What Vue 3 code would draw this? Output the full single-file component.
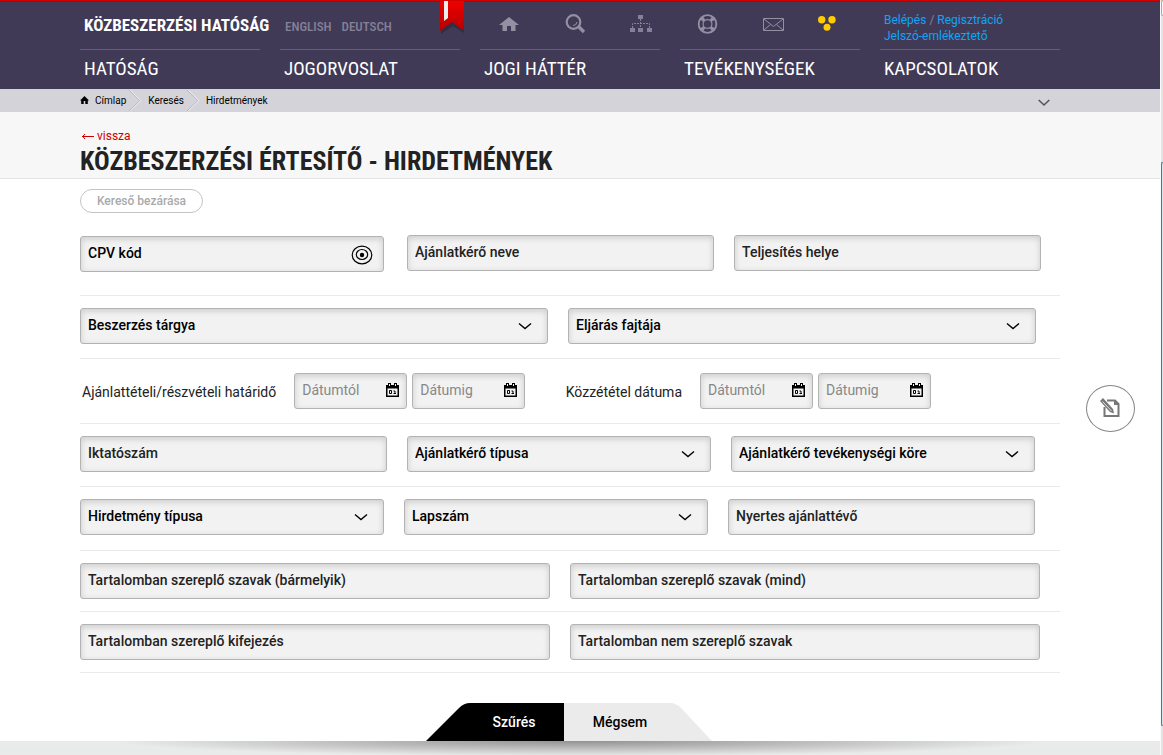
<script setup>
const menu = ['HATÓSÁG', 'JOGORVOSLAT', 'JOGI HÁTTÉR', 'TEVÉKENYSÉGEK', 'KAPCSOLATOK']
const crumbs = ['Keresés', 'Hirdetmények']

const rows = [
  { kind: 'first', fields: [
    { id: 'cpv', label: 'CPV kód', type: 'picker' },
    { id: 'ajanlatkero', label: 'Ajánlatkérő neve', type: 'text' },
    { id: 'hely', label: 'Teljesítés helye', type: 'text' }
  ] },
  { kind: 'pair-select', fields: [
    { id: 'targy', label: 'Beszerzés tárgya', type: 'select' },
    { id: 'eljaras', label: 'Eljárás fajtája', type: 'select' }
  ] },
  { kind: 'dates', groups: [
    { id: 'hatarido', label: 'Ajánlattételi/részvételi határidő' },
    { id: 'kozzetetel', label: 'Közzététel dátuma' }
  ] },
  { kind: 'text-first', fields: [
    { id: 'iktato', label: 'Iktatószám', type: 'text' },
    { id: 'ak-tipus', label: 'Ajánlatkérő típusa', type: 'select' },
    { id: 'ak-kor', label: 'Ajánlatkérő tevékenységi köre', type: 'select' }
  ] },
  { kind: 'text-last', fields: [
    { id: 'h-tipus', label: 'Hirdetmény típusa', type: 'select' },
    { id: 'lapszam', label: 'Lapszám', type: 'select' },
    { id: 'nyertes', label: 'Nyertes ajánlattévő', type: 'text' }
  ] },
  { kind: 'pair-text', fields: [
    { id: 'barmelyik', label: 'Tartalomban szereplő szavak (bármelyik)', type: 'text' },
    { id: 'mind', label: 'Tartalomban szereplő szavak (mind)', type: 'text' }
  ] },
  { kind: 'pair-text', fields: [
    { id: 'kifejezes', label: 'Tartalomban szereplő kifejezés', type: 'text' },
    { id: 'nem', label: 'Tartalomban nem szereplő szavak', type: 'text' }
  ] }
]
const dateParts = [['tol', 'Dátumtól'], ['ig', 'Dátumig']]
</script>

<template>
  <div class="screen">
    <div class="page">
      <header class="top">
        <div class="inner tools">
          <a class="brand" href="#">KÖZBESZERZÉSI HATÓSÁG</a>
          <div class="langs">
            <a href="#">ENGLISH</a>
            <a href="#">DEUTSCH</a>
            <svg class="ribbon" width="25" height="33" viewBox="0 0 25 33" aria-hidden="true">
              <defs>
                <linearGradient id="rib" x1="0" y1="0" x2="0" y2="1">
                  <stop offset="0" stop-color="#f00000" />
                  <stop offset="0.6" stop-color="#cc0000" />
                  <stop offset="1" stop-color="#b40000" />
                </linearGradient>
              </defs>
              <path d="M1 2 L1 33 L13 25 L24 32 L24 2Z" fill="#000" opacity=".22" />
              <path d="M0 0H24V30L12 21L0 30Z" fill="url(#rib)" />
              <path d="M4 0H8V17L4 20Z" fill="#eee" />
            </svg>
          </div>
          <div class="icons left-icons">
            <a href="#" aria-label="Címlap"><svg width="20" height="16" viewBox="0 0 20 16"><path d="M10 1L0 9H3.500V15H8V10H12V15H16.500V9H20Z" fill="#9390a3" /></svg></a>
            <a href="#" aria-label="Keresés"><svg width="23" height="20" viewBox="-2 0 23 20"><circle cx="8.500" cy="8" r="6.800" fill="none" stroke="#9390a3" stroke-width="2.200" /><path d="M13.500 12.500L19 18" stroke="#9390a3" stroke-width="3.200" /><path d="M8 11.500Q11.500 11.500 12 8" stroke="#9390a3" fill="none" /></svg></a>
            <a href="#" aria-label="Oldaltérkép"><svg width="22" height="17" viewBox="0 0 22 17"><path d="M8 0H13V4H8ZM0 13H5V17H0ZM8 13H13V17H8ZM17 13H22V17H17Z" fill="#858198" /><path d="M10.500 4V13M2.500 13V8.500H19.500V13" stroke="#858198" fill="none" stroke-dasharray="2 1" /></svg></a>
          </div>
          <div class="icons right-icons">
            <a href="#" aria-label="Segítség"><svg width="21" height="20" viewBox="0 0 21 20"><circle cx="10.500" cy="10" r="6.800" fill="none" stroke="#9390a3" stroke-width="6" /><path d="M6.500 3.200Q10.500 1 14.500 3.200L13 5.500Q10.500 4.600 8 5.500ZM6.500 16.800Q10.500 19 14.500 16.800L13 14.500Q10.500 15.400 8 14.500ZM3.700 6Q1.500 10 3.700 14L6 12.500Q5 10 6 7.500ZM17.300 6Q19.500 10 17.300 14L15 12.500Q16 10 15 7.500Z" fill="#403a57" /></svg></a>
            <a href="#" aria-label="Levél"><svg width="21" height="14" viewBox="0 0 21 14"><path d="M.5 1.500H20.500V13.500H.5ZM1 2L10.500 9.500L20 2M1 13L7.500 7.500M20 13L13.500 7.500" fill="none" stroke="#9390a3" /></svg></a>
            <a href="#" aria-label="Akadálymentes változat"><svg width="18" height="15" viewBox="0 0 18 15"><g fill="#fc0"><circle cx="3.700" cy="3.700" r="3.700" /><circle cx="14" cy="3.700" r="3.700" /><circle cx="9" cy="11.300" r="3.500" /></g></svg></a>
          </div>
          <div class="login">
            <div><a href="#">Belépés</a> / <a href="#">Regisztráció</a></div>
            <a href="#">Jelszó-emlékeztető</a>
          </div>
        </div>
        <nav class="inner menu">
          <a v-for="m in menu" :key="m" href="#">{{ m }}</a>
        </nav>
      </header>

      <nav class="crumbs">
        <div class="inner crumb-row">
          <a href="#"><svg class="home" width="9" height="8" viewBox="0 0 9 8"><path d="M4.500 0L0 4.500H1.200V8H3.700V5H5.300V8H7.800V4.500H9Z" fill="#000" /></svg>Címlap</a>
          <template v-for="c in crumbs" :key="c">
            <svg class="sep" width="13" height="23" viewBox="0 0 13 23" aria-hidden="true"><path d="M0 1L11 11.500L0 22" fill="none" stroke="#b4b3bd" /><path d="M1 1L12 11.500L1 22" fill="none" stroke="#eeeef2" /></svg>
            <a href="#">{{ c }}</a>
          </template>
          <button class="expand" type="button" aria-label="Lenyitás"><svg width="12" height="8" viewBox="0 0 12 8"><path d="M.7 1L6 6L11.300 1" fill="none" stroke="#555" stroke-width="1.600" /></svg></button>
        </div>
      </nav>

      <div class="title-band">
        <div class="inner">
          <a class="back" href="#"><svg width="12" height="7" viewBox="0 0 12 7" aria-hidden="true"><path d="M0 3.500H12M3 1L.7 3.500L3 6" fill="none" stroke="#c00" /></svg>vissza</a>
          <h1>KÖZBESZERZÉSI ÉRTESÍTŐ - HIRDETMÉNYEK</h1>
        </div>
      </div>

      <form class="search" @submit.prevent>
        <button class="toggle" type="button">Kereső bezárása</button>
        <div v-for="(r, i) in rows" :key="i" class="row" :class="r.kind">
          <template v-if="r.fields">
            <div v-for="f in r.fields" :key="f.id" class="field" :class="f.type">
              <template v-if="f.type === 'select'">
                <select :id="f.id" :aria-label="f.label"><option>{{ f.label }}</option></select>
                <svg class="chev" width="14" height="8" viewBox="0 0 14 8" aria-hidden="true"><path d="M1 1.500L7 6.500L13 1.500" fill="none" stroke="#000" stroke-width="1.400" /></svg>
              </template>
              <template v-else>
                <input :id="f.id" type="text" :placeholder="f.label" :aria-label="f.label" />
                <svg v-if="f.type === 'picker'" class="eye" width="22" height="20" viewBox="0 0 22 20" aria-hidden="true"><g fill="none" stroke="#000" stroke-width="1.200"><ellipse cx="11" cy="10" rx="9.800" ry="8.800" /><ellipse cx="11" cy="9.500" rx="5.700" ry="5" /></g><circle cx="11" cy="10" r="2.200" /></svg>
              </template>
            </div>
          </template>
          <template v-else>
            <div v-for="g in r.groups" :key="g.id" class="date-group">
              <label :for="g.id + '-tol'">{{ g.label }}</label>
              <div v-for="[k, t] in dateParts" :key="k" class="field date">
                <input :id="g.id + '-' + k" type="text" :placeholder="t" :aria-label="g.label + ' ' + t" />
                <svg class="cal" width="13" height="14" viewBox="0 0 13 14" aria-hidden="true"><path d="M0 2H2V0H5V2H8V0H11V2H13V14H0Z" /><path d="M1.500 5.500H11.500V12.500H1.500ZM3 1H4V3H3ZM9 1H10V3H9Z" fill="#f4f4f4" /><path d="M3.500 7.500H5.500V10.500H3.500ZM7.500 8H9V11M7.500 10.500H10" fill="none" stroke="#000" /></svg>
              </div>
            </div>
          </template>
        </div>
        <div class="actions">
          <button class="go" type="submit">Szűrés</button>
          <button class="cancel" type="reset">Mégsem</button>
        </div>
      </form>
      <footer class="foot"></footer>
      <button class="note" type="button" aria-label="Jegyzet">
        <svg width="22" height="20" viewBox="0 0 22 20"><path d="M5.500 9V18H19.500V6L16 2.500H8" fill="none" stroke="#777" stroke-width="2" /><path d="M15 2V7H20Z" fill="#777" /><path d="M1 3L4 0L14 11L15 15.500L11 14Z" fill="#777" /><path d="M3.500 3.500L12.500 13" stroke="#fff" stroke-width=".8" /></svg>
      </button>
    </div>
    <div class="scrollbar"><i class="up"></i><i class="thumb"></i></div>
  </div>
</template>

<style>
body { margin: 0; background: #fff; }
</style>

<style scoped>
.screen { display: flex; min-height: 100vh; font-family: Roboto, "Liberation Sans", sans-serif; color: #222; }
.page { flex: 1; min-width: 0; display: flex; flex-direction: column; position: relative; }
a { color: inherit; text-decoration: none; }
button, input, select { font: inherit; color: inherit; margin: 0; box-sizing: border-box; }
button { border: 0; padding: 0; background: none; cursor: pointer; }
.inner { margin: 0 100px 0 80px; }

.top { height: 88px; border-top: 1px solid #d00000; background: #403a57; box-shadow: inset 0 1px #b00012; }
.tools, .menu { display: grid; grid-template-columns: repeat(5, minmax(0, 1fr)); column-gap: 20px; }
.tools { height: 48px; }
.brand { padding: 14px 0 0 4px; font: 700 17px/20px "Roboto Condensed", Roboto, sans-serif; color: #fff; white-space: nowrap; }
.langs { display: flex; gap: 10px; padding: 18px 0 0 5px; font: 500 13px/16px "Roboto Condensed", Roboto, sans-serif; color: #858198; position: relative; }
.ribbon { position: absolute; top: 0; right: -5px; }
.icons { display: flex; align-items: center; justify-content: space-between; }
.icons svg { display: block; }
.left-icons { padding: 0 8px 3px 19px; }
.right-icons { padding: 0 24px 3px 17px; }
.right-icons a:first-child { margin-right: 10px; }
.login { padding: 11px 0 0 4px; font-size: 12px; line-height: 16px; color: #858198; }
.login a { color: #0ea5f5; }
.menu a { border-top: 1px solid #645f7b; padding: 8px 0 0 4px; font: 400 19px/22px "Roboto Condensed", Roboto, sans-serif; color: #fff; }

.crumbs { background: #d4d3d9; height: 23px; }
.crumb-row { display: flex; align-items: center; height: 23px; font-size: 10px; color: #000; }
.home { margin-right: 6px; }
.sep { margin: 0 6px 0 3px; }
.expand { margin: 5px 10px 0 auto; display: flex; }

.title-band { height: 66px; background: #f7f7f7; border-bottom: 1px solid #e4e4e4; }
.back { display: inline-flex; align-items: center; gap: 3px; margin: 16px 0 0 2px; font-size: 12px; line-height: 16px; color: #c00; }
h1 { margin: 1px 0 0; font: 700 26px/32px "Roboto Condensed", Roboto, sans-serif; white-space: nowrap; }

.search { margin: 10px 100px 0 80px; }
.toggle { display: block; width: 123px; height: 24px; border: 1px solid #c4c4c4; border-radius: 12px; font-size: 12px; font-weight: 500; color: #aaa; }
.row { display: grid; gap: 20px; padding: 12px 0 14px; border-bottom: 1px solid #eaeaea; font-size: 14px; font-weight: 500; }
.row.first { grid-template-columns: repeat(3, minmax(0, 1fr)); padding: 22px 19px 23px 0; }
.row.pair-select { grid-template-columns: repeat(2, minmax(0, 1fr)); padding-right: 24px; }
.row.text-first { grid-template-columns: 307fr 304fr 304fr; padding-right: 25px; }
.row.text-last { grid-template-columns: 304fr 304fr 307fr; padding: 12px 25px 15px 0; }
.row.pair-text { grid-template-columns: repeat(2, minmax(0, 1fr)); padding: 12px 20px 12px 0; }
.row.dates { display: flex; justify-content: space-between; padding: 14px 129px 14px 0; }
.field { position: relative; min-width: 0; }
.picker { margin: 1px 3px 0 0; }
.field input, .field select { display: block; width: 100%; height: 36px; padding: 0 7px 2px; border: 1px solid #b3b3b3; border-radius: 3px; background: #f2f2f2; box-shadow: inset 0 2px 6px rgba(0, 0, 0, .16); outline: 0; appearance: none; color: #000; }
.field input::placeholder { color: #222; opacity: 1; }
.field.picker input::placeholder { color: #000; }
.date-group { display: flex; align-items: center; gap: 5px; font-weight: 400; }
.date-group label { padding: 2px 13px 0 2px; color: #222; white-space: nowrap; }
.date { width: 113px; }
.field.date input::placeholder { color: #888; }
.chev { position: absolute; right: 16px; top: 14px; pointer-events: none; }
.eye { position: absolute; right: 11px; top: 9px; }
.cal { position: absolute; right: 8px; top: 10px; }

.actions { display: flex; justify-content: center; margin: 30px 2px 0 0; font-size: 14px; font-weight: 500; }
.actions button { height: 38px; }
.actions .go { width: 138px; padding-left: 38px; background: #000; color: #fff; clip-path: path("M0 38L33 5Q38 0 44 0H138V38Z"); }
.actions .cancel { width: 148px; padding-right: 36px; background: #ebebeb; color: #000; clip-path: path("M0 0H106Q112 0 117 5L148 38H0Z"); }

.foot { flex: 1; min-height: 14px; background: radial-gradient(ellipse 40% 15px at 50% 0, #929292, #b8b9b8 45%, #e9eaea 100%) #e9eaea; }

.note { position: absolute; right: 25px; top: 385px; width: 49px; height: 47px; padding: 0 2px 2px 0; border: 1px solid #858585; border-radius: 50%; display: flex; align-items: center; justify-content: center; background: #fff; }

.scrollbar { width: 3px; position: relative; background: #e3e3e3; border-left: 1px solid #fafafa; box-sizing: border-box; }
.scrollbar i { position: absolute; left: 0; right: 0; box-sizing: border-box; }
.up { top: 0; height: 16px; border: 1px solid #aaa; border-right: 0; border-radius: 2px 0 0 2px; background: #f4f4f4; }
.thumb { top: 162px; height: 564px; border: 1px solid #3f7ba0; border-right: 0; border-radius: 2px 0 0 2px; background: #cfe6f3; }
</style>
